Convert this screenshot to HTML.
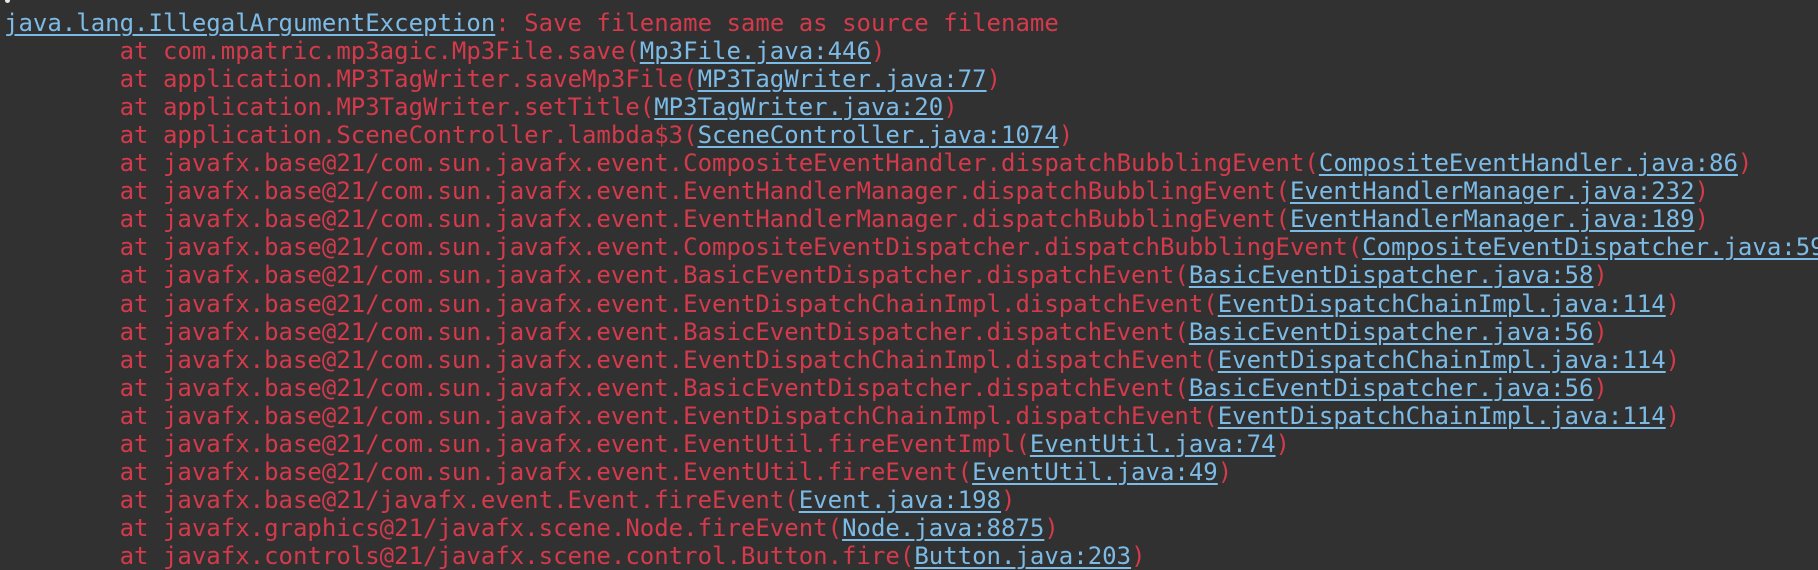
<!DOCTYPE html>
<html><head><meta charset="utf-8"><style>
html,body{margin:0;padding:0;background:#313131;width:1818px;height:562px;overflow:hidden}
pre{margin:0;position:absolute;left:4px;top:-19.3px;font-family:"DejaVu Sans Mono","Liberation Mono",monospace;font-size:24px;line-height:28.08px;color:#d33a4b;white-space:pre}
a{color:#7cbbe6;text-decoration:underline;text-underline-offset:3px;text-decoration-thickness:2px}
.dot{position:absolute;left:5px;top:0;width:5px;height:3px;background:#e8e8e8;border-radius:0 0 3px 3px}
</style></head><body><div class="dot"></div><pre> 
<a>java.lang.IllegalArgumentException</a>: Save filename same as source filename
        at com.mpatric.mp3agic.Mp3File.save(<a>Mp3File.java:446</a>)
        at application.MP3TagWriter.saveMp3File(<a>MP3TagWriter.java:77</a>)
        at application.MP3TagWriter.setTitle(<a>MP3TagWriter.java:20</a>)
        at application.SceneController.lambda$3(<a>SceneController.java:1074</a>)
        at javafx.base@21/com.sun.javafx.event.CompositeEventHandler.dispatchBubblingEvent(<a>CompositeEventHandler.java:86</a>)
        at javafx.base@21/com.sun.javafx.event.EventHandlerManager.dispatchBubblingEvent(<a>EventHandlerManager.java:232</a>)
        at javafx.base@21/com.sun.javafx.event.EventHandlerManager.dispatchBubblingEvent(<a>EventHandlerManager.java:189</a>)
        at javafx.base@21/com.sun.javafx.event.CompositeEventDispatcher.dispatchBubblingEvent(<a>CompositeEventDispatcher.java:59</a>)
        at javafx.base@21/com.sun.javafx.event.BasicEventDispatcher.dispatchEvent(<a>BasicEventDispatcher.java:58</a>)
        at javafx.base@21/com.sun.javafx.event.EventDispatchChainImpl.dispatchEvent(<a>EventDispatchChainImpl.java:114</a>)
        at javafx.base@21/com.sun.javafx.event.BasicEventDispatcher.dispatchEvent(<a>BasicEventDispatcher.java:56</a>)
        at javafx.base@21/com.sun.javafx.event.EventDispatchChainImpl.dispatchEvent(<a>EventDispatchChainImpl.java:114</a>)
        at javafx.base@21/com.sun.javafx.event.BasicEventDispatcher.dispatchEvent(<a>BasicEventDispatcher.java:56</a>)
        at javafx.base@21/com.sun.javafx.event.EventDispatchChainImpl.dispatchEvent(<a>EventDispatchChainImpl.java:114</a>)
        at javafx.base@21/com.sun.javafx.event.EventUtil.fireEventImpl(<a>EventUtil.java:74</a>)
        at javafx.base@21/com.sun.javafx.event.EventUtil.fireEvent(<a>EventUtil.java:49</a>)
        at javafx.base@21/javafx.event.Event.fireEvent(<a>Event.java:198</a>)
        at javafx.graphics@21/javafx.scene.Node.fireEvent(<a>Node.java:8875</a>)
        at javafx.controls@21/javafx.scene.control.Button.fire(<a>Button.java:203</a>)
</pre></body></html>
